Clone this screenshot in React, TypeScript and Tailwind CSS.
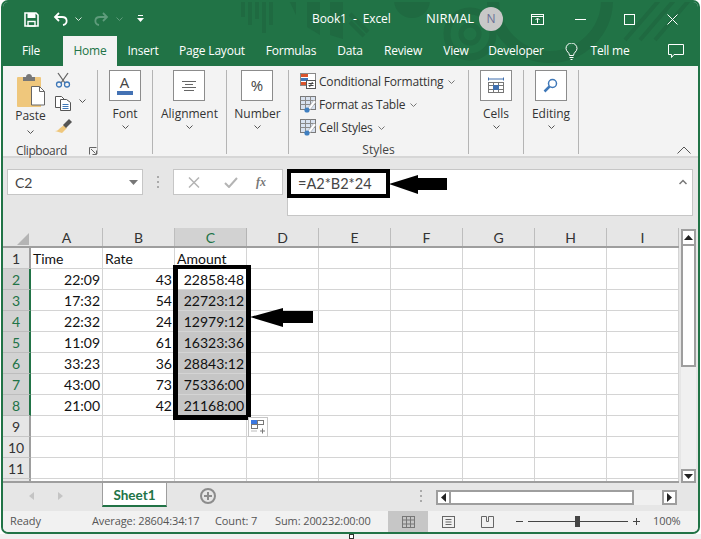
import React from 'react';

const tabs = [
  { label: 'File', w: 'w-[60px] pr-[4px]' },
  { label: 'Home', w: 'w-[54px]', active: true },
  { label: 'Insert', w: 'w-[52px]' },
  { label: 'Page Layout', w: 'w-[86px]' },
  { label: 'Formulas', w: 'w-[72px]' },
  { label: 'Data', w: 'w-[46px]' },
  { label: 'Review', w: 'w-[60px]' },
  { label: 'View', w: 'w-[46px]' },
  { label: 'Developer', w: 'w-[74px]' },
];

const columns = ['A', 'B', 'C', 'D', 'E', 'F', 'G', 'H', 'I'];

const rows = [
  ['Time', 'Rate', 'Amount'],
  ['22:09', '43', '22858:48'],
  ['17:32', '54', '22723:12'],
  ['22:32', '24', '12979:12'],
  ['11:09', '61', '16323:36'],
  ['33:23', '36', '28843:12'],
  ['43:00', '73', '75336:00'],
  ['21:00', '42', '21168:00'],
  [],
  [],
  [],
];

const Chevron = ({ color = '#555' }: { color?: string }) => (
  <svg width="7" height="4" viewBox="0 0 7 4" fill="none">
    <path d="M.5.5l3 3 3-3" stroke={color} />
  </svg>
);

const BigGroup = ({ label, width, children }: { label: string; width: string; children: React.ReactNode }) => (
  <div className={`${width} h-[84px] flex flex-col items-center border-r border-[#b4b4b4] shrink-0`}>
    <div className="w-[32px] h-[31px] mr-[1px] border border-[#8c8c8c] bg-white flex items-center justify-center">{children}</div>
    <span className="mt-[4px] h-[17px] leading-[17px] text-[12px] text-[#333]">{label}</span>
    <span className="mt-[3px] flex"><Chevron /></span>
  </div>
);

const StyleRow = ({ icon, label }: { icon: React.ReactNode; label: string }) => (
  <div className="h-[23px] shrink-0 flex items-center">
    <span className="w-[19px] flex">{icon}</span>
    <span className="text-[12px] text-[#333] tracking-[-0.2px] whitespace-nowrap">{label}</span>
    <span className="ml-[5px] flex"><Chevron color="#777" /></span>
  </div>
);

const TableStyleIcon = () => (
  <svg width="17" height="17" viewBox="0 0 17 17" fill="none">
    <rect x=".5" y=".5" width="15" height="13" fill="#d9e2ef" stroke="#7a7a7a" />
    <path d="M.5 4.500h15M.5 8.500h15M5.500.5v13M10.500.5v13" stroke="#8a8a8a" />
    <path d="M14 4l-6 8 2 2 6-8z" fill="#fff" stroke="#8a8a8a" strokeWidth=".5" />
    <circle cx="7" cy="14" r="2.600" fill="#3f7fc0" />
  </svg>
);

export default function App() {
  return (
    <div className="relative w-[701px] h-[539px] bg-white flex flex-col overflow-hidden font-['Open_Sans',sans-serif]">
      <div className="ml-[1px] w-[699px] h-[534px] shrink-0 border-2 border-[#217346] rounded-[7px] overflow-hidden flex flex-col bg-[#e6e6e6]">
        {/* Title bar + tabs */}
        <div className="relative h-[64px] bg-[#217346] shrink-0 text-white">
          <svg className="absolute left-[-3px] top-[-2px]" width="701" height="66" viewBox="0 0 701 66" fill="none">
            <g fill="#1f6a41">
              <rect x="241" y="0" width="4" height="17" />
              <rect x="248" y="0" width="4" height="25" />
              <rect x="255" y="0" width="4" height="19" />
              <rect x="262" y="0" width="4" height="33" />
              <rect x="269" y="0" width="4" height="25" />
              <path d="M289 0h7v15z" />
              <path d="M307 0h13v35l-13-8z" />
              <path d="M330 0h13v39l-13-4z" />
              <circle cx="412" cy="0" r="18" />
            </g>
            <g stroke="#1f6a41" fill="none">
              <circle cx="470" cy="34" r="23" strokeWidth="7" />
              <circle cx="470" cy="34" r="9" strokeWidth="5" />
              <circle cx="550" cy="0" r="57" strokeWidth="12" />
              <path d="M350 22l14 14M350 14l18 18M625 40l36-42M640 40l36-42M655 40l36-42" strokeWidth="4" />
            </g>
          </svg>

          <div className="relative h-[34px] flex items-center">
            {/* Quick access */}
            <svg className="ml-[21px]" width="15" height="15" viewBox="0 0 15 15" fill="none">
              <path d="M1 1h11l2 2v11H1z" stroke="#fff" strokeWidth="1.600" />
              <rect x="3.500" y="1" width="8" height="5" fill="#fff" />
              <rect x="4" y="9.500" width="7" height="4.500" stroke="#fff" strokeWidth="1.400" />
            </svg>
            <svg className="ml-[14px]" width="15" height="14" viewBox="0 0 15 14" fill="none">
              <path d="M6 1L2 5l4 4" stroke="#fff" strokeWidth="1.800" />
              <path d="M2 5h7c6 0 6 7 1 8" stroke="#fff" strokeWidth="1.800" />
            </svg>
            <span className="ml-[7px] flex"><Chevron color="#d8e6dd" /></span>
            <svg className="ml-[12px]" width="15" height="14" viewBox="0 0 15 14" fill="none">
              <path d="M9 1l4 4-4 4" stroke="#5f9c7c" strokeWidth="1.800" />
              <path d="M13 5H6c-6 0-6 7-1 8" stroke="#5f9c7c" strokeWidth="1.800" />
            </svg>
            <span className="ml-[7px] flex"><Chevron color="#5f9c7c" /></span>
            <svg className="ml-[14px]" width="7" height="8" viewBox="0 0 7 8" fill="#fff">
              <rect x="1" y="0" width="5" height="1" />
              <path d="M0 3h7L3.500 7z" />
            </svg>
            <span className="ml-[168px] text-[12px] tracking-[-0.1px] whitespace-nowrap w-[114px]">Book1&nbsp; -&nbsp; Excel</span>
            <span className="text-[13px] w-[53px]">NIRMAL</span>
            <span className="w-[24px] h-[24px] rounded-full bg-[#c8c8c8] text-[#6a6f94] text-[12px] flex items-center justify-center">N</span>
            <svg className="ml-[28px]" width="13" height="11" viewBox="0 0 13 11" fill="none" stroke="#fff">
              <rect x=".5" y=".5" width="12" height="10" />
              <path d="M.5 2.500h12M6.500 9V4.500M4.500 6l2-2 2 2" />
            </svg>
            <svg className="ml-[31px]" width="11" height="1" viewBox="0 0 11 1"><rect width="11" height="1" fill="#fff" /></svg>
            <svg className="ml-[38px]" width="11" height="11" viewBox="0 0 11 11" fill="none" stroke="#fff"><rect x=".5" y=".5" width="10" height="10" /></svg>
            <svg className="ml-[32px]" width="11" height="11" viewBox="0 0 11 11" fill="none" stroke="#fff"><path d="M.5.5l10 10M10.500.5l-10 10" /></svg>
          </div>

          <div className="relative h-[30px] flex items-stretch text-[12px] tracking-[-0.2px]">
            {tabs.map((t) => (
              <div
                key={t.label}
                className={`${t.w} flex items-center justify-center ${t.active ? 'bg-[#f3f3f3] text-[#217346]' : ''}`}
              >
                {t.label}
              </div>
            ))}
            <div className="w-[36px] flex items-center justify-center">
              <svg width="13" height="17" viewBox="0 0 13 17" fill="none" stroke="#fff">
                <path d="M4.500 12.500c0-3-3.500-4-3.500-7a5.500 5.500 0 0111 0c0 3-3.500 4-3.500 7z" />
                <path d="M4.500 14.500h4M5.500 16.500h2" />
              </svg>
            </div>
            <div className="w-[42px] flex items-center justify-center whitespace-nowrap">Tell me</div>
            <div className="ml-[37px] flex items-center">
              <svg width="16" height="15" viewBox="0 0 16 15" fill="none" stroke="#fff">
                <path d="M.5.5h15v10H6l-2.500 3v-3h-3z" />
              </svg>
            </div>
          </div>
        </div>

        {/* Ribbon */}
        <div className="relative h-[92px] shrink-0 bg-[#f3f3f3] border-b-2 border-[#d6d6d6] flex pt-[4px]">
          {/* Clipboard */}
          <div className="w-[95px] h-[84px] shrink-0 border-r border-[#b4b4b4] flex flex-col">
            <div className="flex h-[72px] shrink-0">
              <div className="w-[52px] flex flex-col items-center pl-[3px]">
                <svg className="mt-[3px] shrink-0" width="30" height="37" viewBox="0 0 30 37" fill="none">
                  <path d="M2 4h22a1 1 0 011 1v29H2a1 1 0 01-1-1V5a1 1 0 011-1z" fill="#efc77c" />
                  <path d="M7 8V4h3c0-4 6-4 6 0h3v4z" fill="#777" />
                  <path d="M15.500 13.500h8l5 5v13.500h-13z" fill="#fff" stroke="#666" />
                  <path d="M23.500 13.500v5h5" stroke="#666" />
                </svg>
                <span className="mt-[-2px] h-[16px] leading-[16px] text-[12px] text-[#333]">Paste</span>
                <span className="mt-[6px] flex"><Chevron /></span>
              </div>
              <div className="flex flex-col">
                <svg className="mt-[2px]" width="16" height="16" viewBox="0 0 16 16" fill="none">
                  <path d="M3 1l7 10M13 1L6 11" stroke="#666" strokeWidth="1.300" />
                  <circle cx="4" cy="12.500" r="2.500" stroke="#3f78b8" strokeWidth="1.300" />
                  <circle cx="12" cy="12.500" r="2.500" stroke="#3f78b8" strokeWidth="1.300" />
                </svg>
                <div className="mt-[8px] flex items-center">
                  <svg width="16" height="15" viewBox="0 0 16 15" fill="none">
                    <path d="M.5.500h6l3 3v8h-9z" fill="#fff" stroke="#555" />
                    <path d="M5.500 3.500h6l4 3v8h-10z" fill="#fff" stroke="#555" />
                    <path d="M7.500 8.500h6M7.500 10.500h6M7.500 12.500h6" stroke="#3f78b8" />
                  </svg>
                  <span className="ml-[8px] mt-[-5px] flex"><Chevron /></span>
                </div>
                <svg className="mt-[8px]" width="17" height="15" viewBox="0 0 17 15" fill="none">
                  <path d="M9 6l3 3-5 5-7-2c3 0 4-2 4-2z" fill="#efc77c" />
                  <path d="M8 6l6-6 3 3-6 6z" fill="#555" />
                </svg>
              </div>
            </div>
            <div className="flex items-center pl-[13px] h-[17px] shrink-0">
              <span className="w-[57px] text-[12px] tracking-[-0.4px] text-[#444]">Clipboard</span>
              <svg className="ml-[16px]" width="8" height="8" viewBox="0 0 8 8" fill="none" stroke="#666">
                <path d="M.5 7.500V.5h7M2 2l4.500 4.500M7.500 3.500v4h-4" />
              </svg>
            </div>
          </div>

          <BigGroup label="Font" width="w-[55px]">
            <div className="flex flex-col items-center">
              <span className="text-[15px] leading-[15px] text-[#444] mt-[-1px]">A</span>
              <span className="w-[16px] h-[4px] bg-[#4472b4] mt-[1px]" />
            </div>
          </BigGroup>
          <BigGroup label="Alignment" width="w-[74px]">
            <svg width="14" height="10" viewBox="0 0 14 10" stroke="#666">
              <path d="M0 .5h14M3 3.500h8M0 6.500h14M2 9.500h10" />
            </svg>
          </BigGroup>
          <BigGroup label="Number" width="w-[62px]">
            <span className="text-[15px] text-[#444]">%</span>
          </BigGroup>

          {/* Styles */}
          <div className="w-[180px] h-[84px] shrink-0 border-r border-[#b4b4b4] flex flex-col pl-[11px]">
            <StyleRow
              label="Conditional Formatting"
              icon={
                <svg width="17" height="17" viewBox="0 0 17 17" fill="none">
                  <rect x=".5" y=".5" width="15" height="12" fill="#fff" stroke="#888" />
                  <rect x="1" y="1" width="7" height="3" fill="#d9532c" />
                  <rect x="1" y="5" width="7" height="3" fill="#3f78b8" />
                  <rect x="1" y="9" width="5" height="3" fill="#d9532c" />
                  <rect x="6.500" y="7.500" width="9" height="8" fill="#fff" stroke="#555" />
                  <path d="M8.500 10.500h5M8.500 12.500h5M12.500 9l-3 5" stroke="#444" />
                </svg>
              }
            />
            <StyleRow label="Format as Table" icon={<TableStyleIcon />} />
            <StyleRow label="Cell Styles" icon={<TableStyleIcon />} />
            <span className="h-[22px] shrink-0 flex items-center justify-center text-[12px] text-[#444] pr-[11px]">Styles</span>
          </div>

          <BigGroup label="Cells" width="w-[55px]">
            <svg width="16" height="17" viewBox="0 0 16 17" fill="none">
              <path d="M.5 .5v3M15.500 .5v3M1 2h14" stroke="#3f6fae" />
              <rect x=".5" y="5.500" width="15" height="10" stroke="#777" />
              <path d="M.5 8.500h15M.5 12.500h15M5.500 5.500v10M10.500 5.500v10" stroke="#777" />
              <rect x="5" y="8" width="6" height="5" fill="#3f6fae" />
            </svg>
          </BigGroup>
          <BigGroup label="Editing" width="w-[55px]">
            <svg width="15" height="15" viewBox="0 0 15 15" fill="none">
              <circle cx="9.500" cy="5.500" r="4" stroke="#3f78b8" strokeWidth="1.500" />
              <path d="M6.500 8.500L1.500 13.500" stroke="#3f78b8" strokeWidth="2.500" />
            </svg>
          </BigGroup>

          <svg className="absolute right-[7px] bottom-[2px]" width="14" height="8" viewBox="0 0 14 8" fill="none" stroke="#555">
            <path d="M.5 7.500L7 1l6.500 6.500" />
          </svg>
        </div>

        {/* Formula bar */}
        <div className="h-[70px] shrink-0 flex items-start pt-[11px] pl-[4px] bg-[#e6e6e6]">
          <div className="w-[136px] h-[26px] border border-[#c6c6c6] bg-white flex items-center justify-between pl-[7px] pr-[4px] text-[14px] text-[#444] font-['Lato',sans-serif]">
            C2
            <svg width="9" height="5" viewBox="0 0 9 5"><path d="M0 0h9L4.500 5z" fill="#777" /></svg>
          </div>
          <div className="w-[30px] h-[26px] flex flex-col items-center justify-center gap-[3px]">
            <span className="w-[2px] h-[2px] bg-[#aaa]" />
            <span className="w-[2px] h-[2px] bg-[#aaa]" />
            <span className="w-[2px] h-[2px] bg-[#aaa]" />
          </div>
          <div className="w-[110px] h-[26px] border border-[#c6c6c6] bg-white flex items-center pl-[14px]">
            <svg width="12" height="11" viewBox="0 0 12 11" fill="none" stroke="#b4b4b4" strokeWidth="1.500"><path d="M1 .5l10 10M11 .5l-10 10" /></svg>
            <svg className="ml-[24px]" width="14" height="11" viewBox="0 0 14 11" fill="none" stroke="#b4b4b4" strokeWidth="2"><path d="M1 6l4 4 8-9" /></svg>
            <span className="ml-[18px] text-[12px] italic font-bold text-[#777] font-['Liberation_Serif',serif]">fx</span>
          </div>
          <div className="ml-[4px] w-[406px] h-[47px] border border-[#c6c6c6] bg-white flex justify-between pl-[10px] pr-[5px] pt-[5px] text-[14.5px] leading-[18px] text-[#444] font-['Lato',sans-serif]">
            =A2*B2*24
            <svg className="mt-[4px]" width="8" height="6" viewBox="0 0 8 6" fill="none" stroke="#777" strokeWidth="1.500"><path d="M.5 5L4 1.500 7.500 5" /></svg>
          </div>
        </div>

        {/* Sheet */}
        <div className="h-[255px] shrink-0 flex overflow-hidden">
          <div className="w-[676px] shrink-0 flex flex-col border-b-2 border-[#9e9e9e] overflow-hidden">
            <div className="h-[20px] shrink-0 flex border-b-2 border-[#9e9e9e] bg-[#e6e6e6]">
              <div className="w-[28px] flex items-end justify-end pr-[2px] pb-[1px]">
                <svg width="12" height="12" viewBox="0 0 12 12"><path d="M12 0v12H0z" fill="#b4b4b4" /></svg>
              </div>
              {columns.map((c) => (
                <div
                  key={c}
                  className={`w-[72px] flex items-center justify-center pt-[2px] text-[14px] leading-none border-r font-['Lato',sans-serif] ${
                    c === 'C' ? 'bg-[#d2d2d2] text-[#217346] border-[#b4b4b4]' : 'text-[#333] border-[#bdbdbd]'
                  }`}
                >
                  {c}
                </div>
              ))}
            </div>
            {rows.map((r, i) => {
              const selected = i >= 1 && i <= 7;
              return (
                <div key={i} className="h-[21px] shrink-0 flex bg-white text-[14px] text-[#111] font-['Lato',sans-serif]">
                  <div
                    className={`w-[28px] shrink-0 flex items-center justify-center border-b ${
                      selected
                        ? 'bg-[#d2d2d2] text-[#217346] border-r-2 border-r-[#217346] border-b-[#bdbdbd]'
                        : 'bg-[#e6e6e6] text-[#333] border-r-2 border-r-[#9e9e9e] border-b-[#c6c6c6]'
                    }`}
                  >
                    {i + 1}
                  </div>
                  {columns.map((c, j) => {
                    const value = r[j];
                    const isText = i === 0;
                    return (
                      <div
                        key={c}
                        className={`w-[72px] shrink-0 flex items-center border-r border-b border-[#d4d4d4] px-[1px] ${
                          isText ? 'justify-start pl-[2px]' : 'justify-end pr-[2px]'
                        } ${c === 'C' && i >= 2 && i <= 7 ? 'bg-[#c6c6c6]' : ''}`}
                      >
                        {value}
                      </div>
                    );
                  })}
                </div>
              );
            })}
            {/* partly hidden row 12 */}
            <div className="h-[21px] shrink-0 flex bg-white">
              <div className="w-[28px] shrink-0 bg-[#e6e6e6] border-r-2 border-r-[#9e9e9e]" />
              {columns.map((c) => (
                <div key={c} className="w-[72px] shrink-0 border-r border-[#d4d4d4]" />
              ))}
            </div>
          </div>

          {/* Vertical scrollbar */}
          <div className="w-[19px] shrink-0 pl-[2px] flex">
            <div className="w-[15px] h-[254px] mt-[1px] flex flex-col bg-[#f0f0f0]">
              <div className="h-[15px] border-2 border-b-0 border-[#9e9e9e] bg-white flex items-center justify-center">
                <svg width="9" height="5" viewBox="0 0 9 5"><path d="M4.500 0L9 5H0z" fill="#222" /></svg>
              </div>
              <div className="h-[123px] border-2 border-[#9e9e9e] bg-white" />
              <div className="flex-1" />
              <div className="h-[14px] border-2 border-[#9e9e9e] bg-white flex items-center justify-center">
                <svg width="9" height="5" viewBox="0 0 9 5"><path d="M0 0h9L4.500 5z" fill="#222" /></svg>
              </div>
            </div>
          </div>
        </div>

        {/* Sheet tabs + horizontal scrollbar */}
        <div className="h-[28px] shrink-0 flex items-start bg-[#e6e6e6]">
          <div className="w-[99px] h-[26px] flex items-center pl-[26px]">
            <svg width="5" height="8" viewBox="0 0 5 8"><path d="M5 0v8L0 4z" fill="#c4c4c4" /></svg>
            <svg className="ml-[24px]" width="5" height="8" viewBox="0 0 5 8"><path d="M0 0v8l5-4z" fill="#c4c4c4" /></svg>
          </div>
          <div className="w-[65px] h-[24px] bg-white border-x border-[#9e9e9e] border-b-2 border-b-[#217346] flex items-center justify-center pt-[2px] text-[13.5px] font-bold text-[#217346] font-['Lato',sans-serif]">
            Sheet1
          </div>
          <div className="ml-[33px] mt-[5px] w-[16px] h-[16px] rounded-full border-2 border-[#8c8c8c] flex items-center justify-center">
            <svg width="8" height="8" viewBox="0 0 8 8"><path d="M3 0h2v3h3v2H5v3H3V5H0V3h3z" fill="#8c8c8c" /></svg>
          </div>
          <div className="ml-[204px] mt-[7px] flex flex-col gap-[3px] w-[16px]">
            <span className="w-[2px] h-[2px] bg-[#aaa]" />
            <span className="w-[2px] h-[2px] bg-[#aaa]" />
            <span className="w-[2px] h-[2px] bg-[#aaa]" />
          </div>
          <div className="mt-[7px] w-[241px] h-[15px] flex bg-[#f0f0f0]">
            <div className="w-[15px] border-2 border-[#9e9e9e] bg-white flex items-center justify-center">
              <svg width="5" height="9" viewBox="0 0 5 9"><path d="M5 0v9L0 4.500z" fill="#222" /></svg>
            </div>
            <div className="w-[183px] border-2 border-l-0 border-[#9e9e9e] bg-white" />
            <div className="flex-1" />
            <div className="w-[15px] border-2 border-[#9e9e9e] bg-white flex items-center justify-center">
              <svg width="5" height="9" viewBox="0 0 5 9"><path d="M0 0v9l5-4.500z" fill="#222" /></svg>
            </div>
          </div>
        </div>

        {/* Status bar */}
        <div className="flex-1 bg-[#f1f1f1] flex items-stretch text-[11px] tracking-[-0.1px] text-[#555] whitespace-nowrap">
          <span className="w-[89px] pl-[7px] flex items-center">Ready</span>
          <span className="w-[123px] flex items-center">Average: 28604:34:17</span>
          <span className="w-[60px] flex items-center">Count: 7</span>
          <span className="w-[113px] flex items-center">Sum: 200232:00:00</span>
          <div className="w-[40px] bg-[#c6c6c6] flex items-center justify-center">
            <svg width="13" height="12" viewBox="0 0 13 12" fill="none" stroke="#777">
              <rect x=".5" y=".5" width="12" height="11" />
              <path d="M4.500 .5v11M8.500 .5v11M.5 4h12M.5 8h12" />
            </svg>
          </div>
          <div className="w-[40px] flex items-center justify-center">
            <svg width="13" height="12" viewBox="0 0 13 12" fill="none" stroke="#666">
              <rect x=".5" y=".5" width="12" height="11" />
              <path d="M3.500 3.500h6M3.500 6h6M3.500 8.500h6" />
            </svg>
          </div>
          <div className="w-[39px] flex items-center justify-center">
            <svg width="13" height="12" viewBox="0 0 13 12" fill="none" stroke="#666">
              <path d="M.5 .5v11h12V.5M.5 .5h5v5h2v-5h5" />
            </svg>
          </div>
          <div className="ml-[9px] flex items-center">
            <span className="w-[7px] h-[1px] bg-[#444]" />
            <div className="relative ml-[5px] w-[100px] h-[1px] bg-[#444]">
              <span className="absolute left-[47px] top-[-5px] w-[5px] h-[11px] bg-[#444]" />
            </div>
            <svg className="ml-[5px]" width="7" height="7" viewBox="0 0 7 7" stroke="#444"><path d="M0 3.500h7M3.500 0v7" /></svg>
            <span className="ml-[13px] text-[#555]">100%</span>
          </div>
        </div>
      </div>
      <div className="flex-1 bg-[#f0f0f0]" />

      {/* Annotations drawn over the screenshot */}
      <div className="absolute left-[287px] top-[169px] w-[103px] h-[29px] border-[4px] border-black" />
      <div className="absolute left-[173px] top-[265px] w-[78px] h-[155px] border-[4px] border-black border-x-[5px] border-b-[5px]" />
      <svg className="absolute left-[389px] top-[175px]" width="58" height="19" viewBox="0 0 58 19"><path d="M0 9L29 0v3h29v12H29v4z" fill="#000" /></svg>
      <svg className="absolute left-[250px] top-[308px]" width="63" height="19" viewBox="0 0 63 19"><path d="M0 9L33 0v3h30v12H33v4z" fill="#000" /></svg>

      {/* Paste options button */}
      <div className="absolute left-[248px] top-[417px] w-[20px] h-[20px] bg-white border border-[#c6c6c6] flex items-center justify-center">
        <svg width="14" height="14" viewBox="0 0 14 14" fill="none">
          <rect x=".5" y=".5" width="6" height="4" fill="#3b78e0" stroke="#3b78e0" />
          <rect x="6.500" y=".5" width="6" height="4" stroke="#777" />
          <rect x=".5" y="4.500" width="6" height="4" stroke="#777" />
          <path d="M.5 11h6" stroke="#777" strokeDasharray="1 1" />
          <path d="M9 11h5M11.500 8.500v5" stroke="#777" />
        </svg>
      </div>

      {/* Resize handle */}
      <div className="absolute left-[349px] top-[534px] w-[5px] h-[5px] bg-white border border-[#333]" />
    </div>
  );
}
